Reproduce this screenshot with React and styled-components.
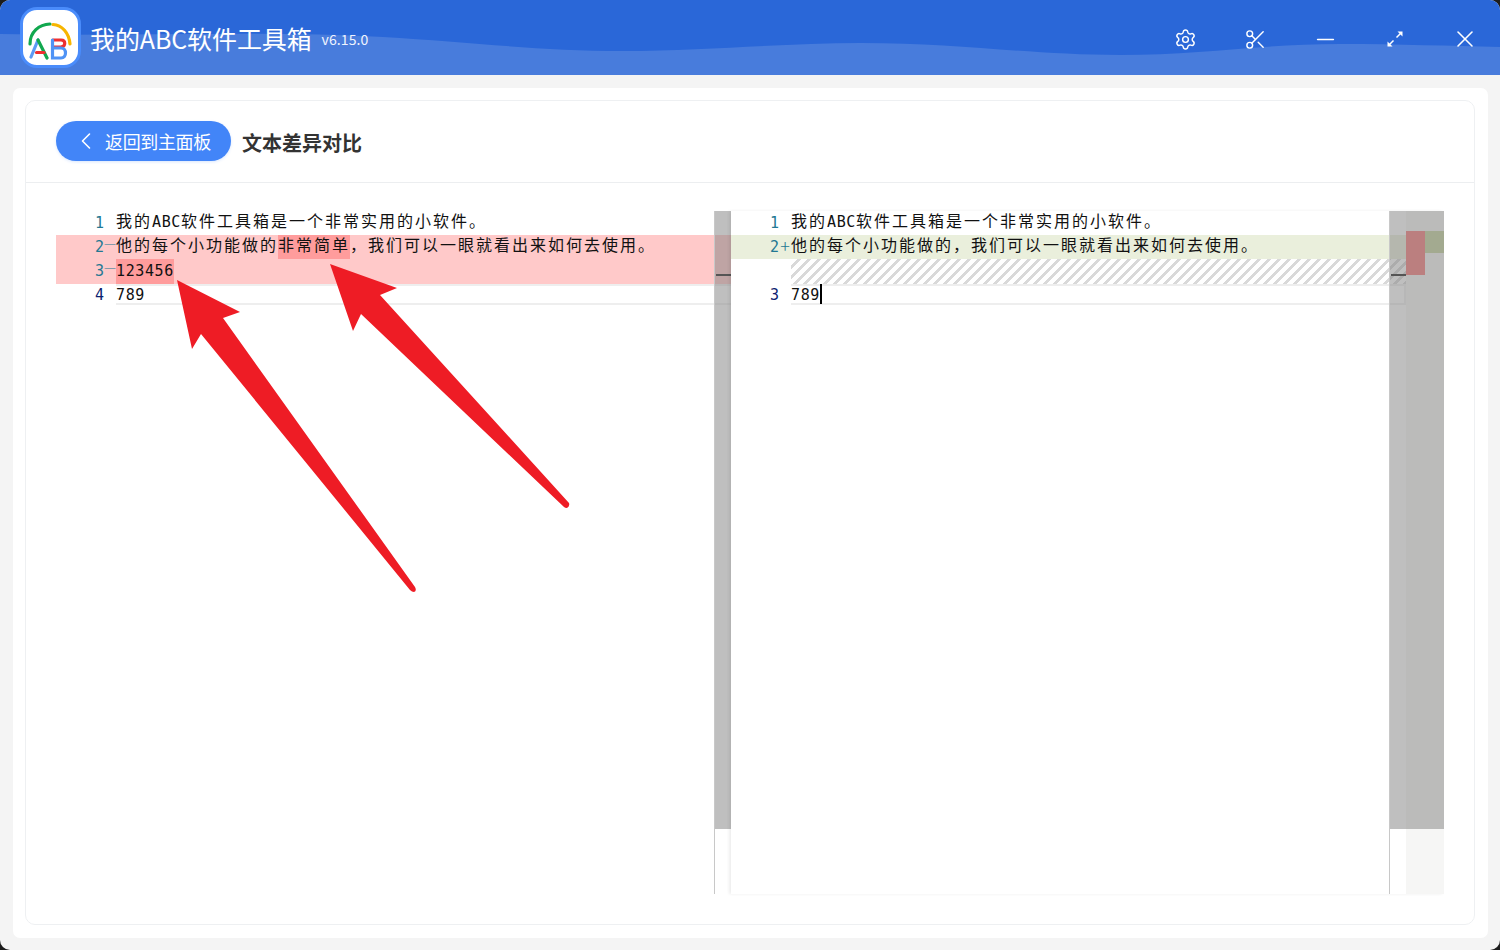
import React from 'react';
import styled, { createGlobalStyle } from 'styled-components';
import { Settings, Scissors, Minus, X, ChevronLeft } from 'lucide-react';

const Global = createGlobalStyle`
  html, body { margin: 0; padding: 0; background: #1c1c1c; }
  body { font-family: "Noto Sans CJK SC", "Noto Sans", sans-serif; }
`;

const Window = styled.div`
  width: 1500px;
  height: 950px;
  background: #f4f4f4;
  border-radius: 10px;
  overflow: hidden;
  display: flex;
  flex-direction: column;
`;

const TitleBar = styled.header`
  position: relative;
  height: 75px;
  flex: none;
  background: #2a67d8;
  display: flex;
  align-items: center;
  padding-left: 20px;
`;

const Wave = styled.svg`
  position: absolute;
  left: 0;
  top: 0;
`;

const LogoTile = styled.div`
  position: relative;
  width: 55px;
  height: 55px;
  border: 3px solid #4a8cfb;
  border-radius: 17px;
  background: #fff;
  margin-top: -1px;
`;

const AppName = styled.div`
  position: relative;
  margin-left: 9px;
  color: #fff;
  font-size: 25px;
  line-height: 34px;
  letter-spacing: -0.1px;
`;

const Version = styled.div`
  position: relative;
  margin: 3px 0 0 10px;
  color: #f0f4ff;
  font-size: 14px;
  letter-spacing: 0.1px;
`;

const Controls = styled.div`
  position: relative;
  margin-left: auto;
  display: flex;
`;

const Control = styled.div`
  width: 70px;
  height: 75px;
  display: flex;
  align-items: center;
  justify-content: center;
  color: #fff;
  padding-top: 3px;
  box-sizing: border-box;
`;

const Body = styled.main`
  flex: 1;
  min-height: 0;
  padding: 13px 12px 12px 13px;
  display: flex;
`;

const Card = styled.div`
  flex: 1;
  background: #fff;
  border-radius: 7px;
  padding: 12px 13px 13px 12px;
  display: flex;
`;

const Inner = styled.div`
  flex: 1;
  border: 1px solid #eef0f2;
  border-radius: 10px;
  display: flex;
  flex-direction: column;
`;

const PageHead = styled.div`
  height: 82px;
  flex: none;
  box-sizing: border-box;
  border-bottom: 1px solid #eceef0;
  padding: 20px 0 0 30px;
  display: flex;
  align-items: flex-start;
`;

const BackButton = styled.button`
  width: 175px;
  height: 40px;
  border: 0;
  border-radius: 20px;
  background: #4285f8;
  box-shadow: 0 1px 3px rgba(66, 133, 248, 0.2);
  color: #fff;
  font: inherit;
  font-size: 18px;
  letter-spacing: -0.35px;
  display: flex;
  align-items: center;
  padding: 0 0 0 16px;
  gap: 5px;
`;

const PageTitle = styled.h1`
  margin: 7px 0 0 11px;
  font-size: 20px;
  line-height: 30px;
  font-weight: 700;
  color: #333;
`;

const DiffArea = styled.div`
  position: relative;
  margin: 28px 30px 0;
  height: 683px;
  display: grid;
  grid-template-columns: 675px 713px;
`;

const Pane = styled.section`
  position: relative;
  background: #fff;
`;

const RightPane = styled.section`
  position: relative;
  display: grid;
  grid-template-columns: 675px 38px;
  background: #fff;
  box-shadow: -2px 0 3px rgba(0, 0, 0, 0.07);
`;

const Editor = styled.div`
  position: relative;
`;

const Row = styled.div`
  display: flex;
  height: ${p => (p.$last ? '21px' : p.$tall ? '25px' : '24px')};
  background: ${p => p.$bg || 'transparent'};
  font-family: "DejaVu Sans Mono", "Noto Sans CJK SC", monospace;
  font-size: 15px;
  line-height: 20px;
  letter-spacing: 0.6px;
  color: #111;
`;

const LineNo = styled.span`
  width: 48px;
  flex: none;
  text-align: right;
  letter-spacing: 0;
  box-sizing: border-box;
  padding-top: ${p => (p.$active ? '1px' : '2px')};
  color: ${p => (p.$active ? '#0b216f' : '#237893')};
`;

const Sign = styled.span`
  width: 12px;
  flex: none;
  text-align: center;
  font-family: "Noto Sans CJK SC", sans-serif;
  font-size: ${p => p.$size || 16}px;
  font-weight: 300;
  letter-spacing: 0;
  color: #237893;
`;

const Code = styled.div`
  flex: 1;
  white-space: nowrap;
  box-sizing: border-box;
  line-height: 18px;
`;

const BoxedCode = styled.div`
  flex: 1;
  height: 21px;
  box-sizing: border-box;
  white-space: nowrap;
  border-top: 2px solid #eee;
  border-bottom: 2px solid #eee;
  border-right: ${p => (p.$open ? '0' : '2px solid #eee')};
  line-height: 19px;
`;

const Han = styled.span`
  font-family: "Noto Sans CJK SC", sans-serif;
  font-size: 16px;
  letter-spacing: 2px;
`;

const Mark = styled.span`
  display: inline-block;
  height: 100%;
  vertical-align: top;
  background: #ff9c9c;
`;

const DigitMark = styled(Mark)`
  box-sizing: border-box;
  padding-top: 3px;
`;

const Hatch = styled.div`
  flex: 1;
  background: repeating-linear-gradient(-45deg, #d9d9d9 0 2.4px, #fff 2.4px 7.07px);
`;

const Caret = styled.span`
  display: inline-block;
  width: 2px;
  height: 20px;
  margin-top: -2px;
  vertical-align: top;
  background: #000;
`;

const Track = styled.div`
  position: absolute;
  top: 0;
  right: 0;
  bottom: 0;
  width: 17px;
  box-sizing: border-box;
  border-left: 1px solid #c8c8c8;
`;

const Slider = styled.div`
  position: absolute;
  top: 0;
  left: 0;
  right: 0;
  height: 618px;
  background: rgba(128, 128, 128, 0.5);
`;

const Tick = styled.div`
  position: absolute;
  top: 63px;
  left: 1px;
  right: 0;
  height: 2px;
  background: #555;
`;

const Overview = styled.div`
  position: relative;
  background: #f6f6f5;
`;

const OverviewMark = styled.div`
  position: absolute;
  top: 20px;
  width: 19px;
  height: ${p => p.$h}px;
  left: ${p => p.$left}px;
  background: ${p => p.$bg};
`;

const Arrows = styled.svg`
  position: absolute;
  left: 0;
  top: 0;
  pointer-events: none;
`;

const Logo = () => (
  <svg width="55" height="55" viewBox="3 -3 55 55" fill="none" strokeWidth="3.2" strokeLinecap="round">
    <path d="M10 31C10 19 19 11.500 30 11" stroke="#11a84f" />
    <path d="M33 11.500C42 12 49 20 50 31" stroke="#f7b500" />
    <path d="M11 44L18 27" stroke="#5b9bf5" />
    <path d="M18 27L27 45" stroke="#11a84f" />
    <path d="M16.500 39.500H24" stroke="#ee3030" />
    <path d="M33 27H41C46 27 46 33.500 41 34H34" stroke="#ee3030" />
    <path d="M32.500 27V45H41C47 45 47 35 41 35H34" stroke="#4f93f5" />
  </svg>
);

const ExpandIcon = () => (
  <svg width="18" height="18" viewBox="0 0 18 18" fill="#fff">
    <path d="M3.500 14.500L7.500 10.500M10.500 7.500L14.500 3.500" stroke="#fff" strokeWidth="1.500" />
    <path d="M11.500 1.500H16.500V6.500Z" />
    <path d="M1.500 11.500V16.500H6.500Z" />
  </svg>
);

const App = () => (
  <>
    <Global />
    <Window>
      <TitleBar>
        <Wave width="1500" height="75" viewBox="0 0 1500 75">
          <path
            d="M0 34C120 37 260 30 383 37C470 42 540 51 622 51C710 51 780 43 861 43C960 43 1030 55 1120 55C1200 55 1260 44 1340 44C1400 44 1450 46 1500 47V75H0Z"
            fill="#487cdc"
          />
        </Wave>
        <LogoTile><Logo /></LogoTile>
        <AppName>我的ABC软件工具箱</AppName>
        <Version>v6.15.0</Version>
        <Controls>
          <Control><Settings size={23} strokeWidth={1.5} /></Control>
          <Control><Scissors size={23} strokeWidth={1.5} /></Control>
          <Control><Minus size={27} strokeWidth={1.4} /></Control>
          <Control><ExpandIcon /></Control>
          <Control><X size={28} strokeWidth={1.3} /></Control>
        </Controls>
      </TitleBar>
      <Body>
        <Card>
          <Inner>
            <PageHead>
              <BackButton><ChevronLeft size={28} strokeWidth={1.4} />返回到主面板</BackButton>
              <PageTitle>文本差异对比</PageTitle>
            </PageHead>
            <DiffArea>
              <Pane>
                <Row>
                  <LineNo>1</LineNo><Sign />
                  <Code><Han>我的</Han>ABC<Han>软件工具箱是一个非常实用的小软件。</Han></Code>
                </Row>
                <Row $bg="#ffc9c9">
                  <LineNo>2</LineNo><Sign $size={12}>一</Sign>
                  <Code>
                    <Han>他的每个小功能做的</Han><Mark><Han>非常简单</Han></Mark><Han>，我们可以一眼就看出来如何去使用。</Han>
                  </Code>
                </Row>
                <Row $bg="#ffc9c9" $tall>
                  <LineNo>3</LineNo><Sign $size={12}>一</Sign>
                  <Code><DigitMark>123456</DigitMark></Code>
                </Row>
                <Row $last>
                  <LineNo $active>4</LineNo><Sign />
                  <BoxedCode $open>789</BoxedCode>
                </Row>
                <Track>
                  <Slider />
                  <Tick />
                </Track>
              </Pane>
              <RightPane>
                <Editor>
                  <Row>
                    <LineNo>1</LineNo><Sign />
                    <Code><Han>我的</Han>ABC<Han>软件工具箱是一个非常实用的小软件。</Han></Code>
                  </Row>
                  <Row $bg="#eaefdc">
                    <LineNo>2</LineNo><Sign $size={18}>+</Sign>
                    <Code><Han>他的每个小功能做的，我们可以一眼就看出来如何去使用。</Han></Code>
                  </Row>
                  <Row $tall>
                    <LineNo /><Sign />
                    <Hatch />
                  </Row>
                  <Row $last>
                    <LineNo $active>3</LineNo><Sign />
                    <BoxedCode>789<Caret /></BoxedCode>
                  </Row>
                  <Track>
                    <Slider />
                    <Tick />
                  </Track>
                </Editor>
                <Overview>
                  <OverviewMark $left={0} $h={44} $bg="#f67e7e" />
                  <OverviewMark $left={19} $h={22} $bg="#c6d4a0" />
                  <Slider />
                </Overview>
              </RightPane>
              <Arrows width="520" height="400" viewBox="0 0 520 400">
                <path
                  d="M121 69L184 101L167 107L359 376Q361 380 358 381Q356 381 354 379L145 123L136 138Z"
                  fill="#ee1c25"
                />
                <path
                  d="M274 53L341 77L324 84L513 292Q514 295 511 297Q509 297 508 296L305 103L297 120Z"
                  fill="#ee1c25"
                />
              </Arrows>
            </DiffArea>
          </Inner>
        </Card>
      </Body>
    </Window>
  </>
);

export default App;
